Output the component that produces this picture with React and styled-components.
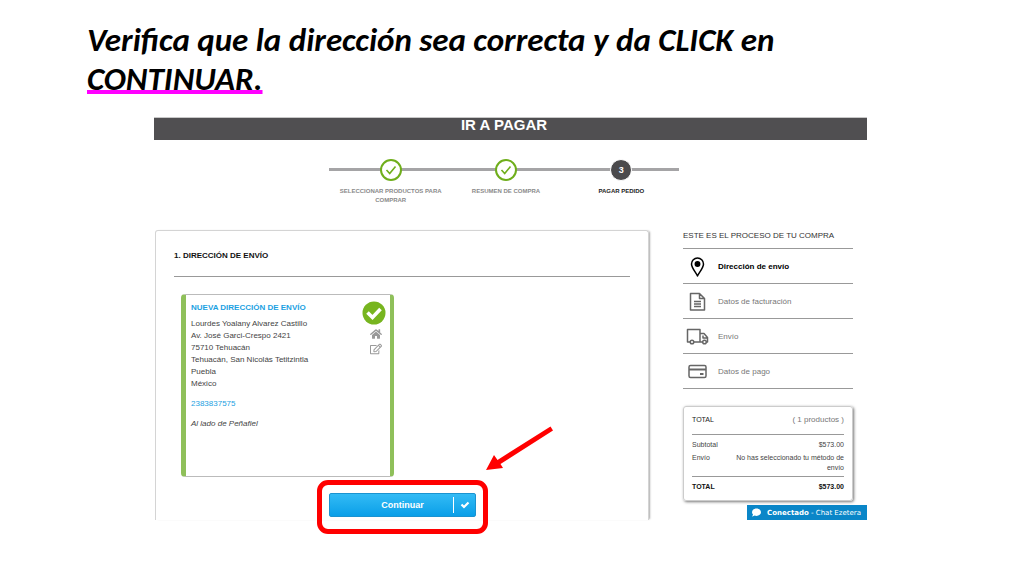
import styled, { createGlobalStyle } from "styled-components";
import { FaComment, FaHome, FaRegEdit } from "react-icons/fa";

const GlobalStyle = createGlobalStyle`
  * {
    box-sizing: border-box;
  }
  body {
    margin: 0;
    background: #fff;
    font-family: "Liberation Sans", Arial, sans-serif;
    font-size: 8px;
    line-height: 12px;
    color: #444;
  }
`

const Slide = styled.main`
  padding: 21px 157px 40px 154px;
`

const Title = styled.h1`
  margin: 0 -60px 18px -67px;
  font-family: Carlito, Lato, sans-serif;
  font-size: 33px;
  font-style: italic;
  font-weight: 700;
  line-height: 39px;
  color: #000;
`

const Marked = styled.span`
  display: block;
  text-decoration: underline #f0f 4px;
  text-decoration-skip-ink: none;
  text-underline-offset: 0;
`

const Shot = styled.section`
  position: relative;
`

const Bar = styled.h2`
  height: 23px;
  margin: 0;
  padding-right: 13px;
  border-top: 1px solid #c8c8c8;
  background: #504f51;
  color: #fff;
  font-size: 15px;
  line-height: 14px;
  text-align: center;
`

const StepsRow = styled.div`
  padding-right: 13px;
`

const Steps = styled.ol`
  display: grid;
  grid-template-columns: repeat(3, 1fr);
  width: 350px;
  margin: 19px auto 0;
  padding: 0 0 0 4px;
  list-style: none;
  background: linear-gradient(#a5a4a6, #a5a4a6) 0 9px / 100% 3px no-repeat;
`

const Step = styled.li`
  display: flex;
  flex-direction: column;
  align-items: center;
  gap: 6px;
  font-size: 6px;
  font-weight: 700;
  line-height: 9px;
  text-align: center;
  color: ${props => props.$current ? "#222" : "#8a8a8a"};
`

const StepDot = styled.span`
  display: flex;
  align-items: center;
  justify-content: center;
  width: 22px;
  height: 22px;
  border: ${props => props.$done ? "2px solid #6fae1b" : "1px solid #fff"};
  border-radius: 50%;
  background: ${props => props.$done ? "#fff" : "#4b4a4c"};
  color: ${props => props.$done ? "#6fae1b" : "#fff"};
  font-size: 9px;
`

const Columns = styled.div`
  display: grid;
  grid-template-columns: 1fr 170px;
  column-gap: 34px;
  padding: 0 14px 0 1px;
  margin-top: 25px;
`

const Panel = styled.section`
  padding: 19px 18px 3px;
  border: 1px solid #d4d4d4;
  border-bottom: none;
  border-radius: 3px 3px 0 0;
  box-shadow: 2px 0 2px -1px #aaa;
`

const PanelTitle = styled.h3`
  margin: 0 0 17px;
  padding-bottom: 14px;
  border-bottom: 1px solid #999;
  font-size: 8px;
  color: #111;
`

const AddressCard = styled.article`
  display: flex;
  justify-content: space-between;
  width: 213px;
  min-height: 183px;
  margin-left: 7px;
  padding: 7px 4px 0 5px;
  border: 1px solid #bbb;
  border-left: 5px solid #8fc05a;
  border-right: 4px solid #8fc05a;
  border-radius: 4px;
`

const AddressTitle = styled.h4`
  margin: 0 0 4px;
  font-size: 8px;
  color: #1ba1e2;
`

const Address = styled.address`
  font-style: normal;
`

const Phone = styled.a`
  display: block;
  margin: 8px 0;
  color: #1ba1e2;
  text-decoration: none;
`

const Note = styled.p`
  margin: 0;
  font-style: italic;
`

const CardActions = styled.div`
  display: flex;
  flex-direction: column;
  align-items: center;
  gap: 3px;
  width: 24px;
  margin-top: -1px;
  color: #999;
`

const IconButton = styled.button`
  display: flex;
  padding: 0 0 0 4px;
  border: none;
  background: none;
  color: inherit;
`

const Selected = styled.svg`
  flex: none;
  width: 24px;
  height: 24px;
  fill: #77b51f;
`

const Action = styled.div`
  position: relative;
  width: 147px;
  margin: 16px 0 0 155px;
`

const Continue = styled.button`
  display: flex;
  align-items: center;
  width: 100%;
  height: 24px;
  padding: 0;
  border: 1px solid #1b93d0;
  border-radius: 2px;
  background: linear-gradient(#33bbf5, #0a9fe8);
  color: #fff;
  font-family: inherit;
  font-size: 9px;
  font-weight: 700;
`

const ContinueLabel = styled.span`
  flex: 1;
  padding-left: 22px;
`

const ContinueIcon = styled.span`
  display: flex;
  align-items: center;
  justify-content: center;
  width: 22px;
  height: 16px;
  border-left: 1px solid #fff;
`

const RedFrame = styled.div`
  position: absolute;
  inset: -13px -12px -17px;
  border: 5px solid #f00;
  border-radius: 11px;
  pointer-events: none;
`

const Arrow = styled.svg`
  position: absolute;
  left: 157px;
  top: -68px;
`

const SideTitle = styled.h3`
  margin: 0;
  padding-bottom: 7px;
  border-bottom: 1px solid #999;
  font-size: 8px;
  font-weight: 400;
  line-height: 11px;
  color: #333;
`

const StageList = styled.ul`
  margin: 0 0 17px;
  padding: 0;
  list-style: none;
`

const Stage = styled.li`
  display: flex;
  align-items: center;
  gap: 9px;
  height: 35px;
  padding: 2px 0 0 3px;
  border-bottom: 1px solid #999;
  font-weight: ${props => props.$active ? 700 : 400};
  color: ${props => props.$active ? "#000" : "#777"};
`

const StageIcon = styled.svg`
  width: 23px;
  height: 22px;
  fill: none;
  stroke: ${props => props.$active ? "#000" : "#666"};
  stroke-width: 1.5;
  stroke-linejoin: round;
`

const Summary = styled.table`
  width: 100%;
  padding: 0 8px;
  border: 1px solid #ccc;
  border-radius: 3px;
  border-spacing: 0;
  box-shadow: 1px 1px 3px #777;
  font-size: 7px;
  line-height: 10px;

  th, td {
    padding: 0 0 3px;
    vertical-align: top;
  }
  th {
    font-weight: 400;
    text-align: left;
  }
  td {
    text-align: right;
  }
`

const SummaryHead = styled.tr`
  th, td {
    padding: 8px 0 9px;
    border-bottom: 1px solid #999;
    color: #222;
  }
  td {
    font-size: 8px;
    color: #777;
  }
`

const SummaryFirst = styled.tr`
  th, td {
    padding-top: 5px;
  }
`

const SummaryTotal = styled.tr`
  th, td {
    padding: 5px 0 8px;
    border-top: 1px solid #999;
    font-weight: 700;
    color: #111;
  }
`

const Chat = styled.button`
  position: absolute;
  right: 0;
  bottom: 0;
  display: flex;
  align-items: center;
  gap: 6px;
  height: 15px;
  padding: 0 6px 0 5px;
  border: none;
  background: #0a86c8;
  color: #fff;
  font-family: "DejaVu Sans", sans-serif;
  font-size: 7px;
  white-space: nowrap;
`

const PinIcon = () => (
  <StageIcon $active viewBox="0 0 23 22">
    <path d="M11.5 20C10 16.5 5.5 12 5.5 8a6 6 0 0 1 12 0c0 4-4.5 8.5-6 12z" />
    <circle cx="11.5" cy="8" r="2.2" fill="#000" />
  </StageIcon>
)

const InvoiceIcon = () => (
  <StageIcon viewBox="0 0 23 22">
    <path d="M4.500 2.500h9l5 5v11.500h-14z M13.500 2.500v5h5 M8 10.500h7 M8 13h7 M8 15.500h7" />
  </StageIcon>
)

const TruckIcon = () => (
  <StageIcon viewBox="0 0 23 22">
    <path d="M4 16H1.500V3.500h12.500V16H8 M14 7.500h4l3.500 4V16h-1 M16.500 16H14 M17 9.500v2.500h4" />
    <circle cx="6" cy="16" r="1.800" />
    <circle cx="18.500" cy="16" r="1.800" />
  </StageIcon>
)

const CardIcon = () => (
  <StageIcon viewBox="0 0 23 22">
    <rect x="3" y="4.500" width="17" height="12" rx="1.500" />
    <path d="M3 8.500h17" strokeWidth="2" />
    <path d="M14 13h3.500" strokeWidth="2" />
  </StageIcon>
)

const stages = [
  { name: "Dirección de envío", Icon: PinIcon, active: true },
  { name: "Datos de facturación", Icon: InvoiceIcon },
  { name: "Envío", Icon: TruckIcon },
  { name: "Datos de pago", Icon: CardIcon },
]

const StepCheck = () => (
  <svg width="14" height="14" viewBox="0 0 14 14" fill="none" stroke="currentColor" strokeWidth="1.6">
    <path d="M2.500 7l3.200 3.500L11.500 3.500" />
  </svg>
)

const BoldCheck = () => (
  <svg width="10" height="8" viewBox="0 0 10 8" fill="none" stroke="currentColor" strokeWidth="2.200">
    <path d="M1.500 3.500L4 6L8.500 1.500" />
  </svg>
)

function App() {
  return (
    <>
      <GlobalStyle />
      <Slide>
        <Title>
          Verifica que la dirección sea correcta y da CLICK en
          <Marked>CONTINUAR.</Marked>
        </Title>
        <Shot>
          <Bar>IR A PAGAR</Bar>
          <StepsRow>
            <Steps>
              <Step><StepDot $done><StepCheck /></StepDot>SELECCIONAR PRODUCTOS PARA COMPRAR</Step>
              <Step><StepDot $done><StepCheck /></StepDot>RESUMEN DE COMPRA</Step>
              <Step $current><StepDot>3</StepDot>PAGAR PEDIDO</Step>
            </Steps>
          </StepsRow>
          <Columns>
            <Panel>
              <PanelTitle>1. DIRECCIÓN DE ENVÍO</PanelTitle>
              <AddressCard>
                <div>
                  <AddressTitle>NUEVA DIRECCIÓN DE ENVÍO</AddressTitle>
                  <Address>
                    Lourdes Yoalany Alvarez Castillo<br />
                    Av. José Garci-Crespo 2421<br />
                    75710 Tehuacán<br />
                    Tehuacán, San Nicolás Tetitzintla<br />
                    Puebla<br />
                    México
                    <Phone href="tel:2383837575">2383837575</Phone>
                  </Address>
                  <Note>Al lado de Peñafiel</Note>
                </div>
                <CardActions>
                  <Selected viewBox="0 0 24 24">
                    <circle cx="12" cy="12" r="11.500" />
                    <path d="M5.500 11.500l5 5l8-8.500" fill="none" stroke="#fff" strokeWidth="3.600" />
                  </Selected>
                  <IconButton aria-label="Principal"><FaHome size={12} /></IconButton>
                  <IconButton aria-label="Editar"><FaRegEdit size={12} /></IconButton>
                </CardActions>
              </AddressCard>
              <Action>
                <Continue>
                  <ContinueLabel>Continuar</ContinueLabel>
                  <ContinueIcon><BoldCheck /></ContinueIcon>
                </Continue>
                <RedFrame />
                <Arrow width="68" height="48" viewBox="0 0 68 48" fill="#f00">
                  <path d="M64.500 1.500L67 5.500L14.500 39L17 43L0 45L8 30L11.500 35z" />
                </Arrow>
              </Action>
            </Panel>
            <aside>
              <SideTitle>ESTE ES EL PROCESO DE TU COMPRA</SideTitle>
              <StageList>
                {stages.map(({ name, Icon, active }) => (
                  <Stage key={name} $active={active}><Icon />{name}</Stage>
                ))}
              </StageList>
              <Summary>
                <tbody>
                  <SummaryHead><th>TOTAL</th><td>( 1 productos )</td></SummaryHead>
                  <SummaryFirst><th>Subtotal</th><td>$573.00</td></SummaryFirst>
                  <tr><th>Envío</th><td>No has seleccionado tu método de envío</td></tr>
                  <SummaryTotal><th>TOTAL</th><td>$573.00</td></SummaryTotal>
                </tbody>
              </Summary>
            </aside>
          </Columns>
          <Chat><FaComment size={9} /><span><b>Conectado</b> - Chat Ezetera</span></Chat>
        </Shot>
      </Slide>
    </>
  );
}

export default App;
